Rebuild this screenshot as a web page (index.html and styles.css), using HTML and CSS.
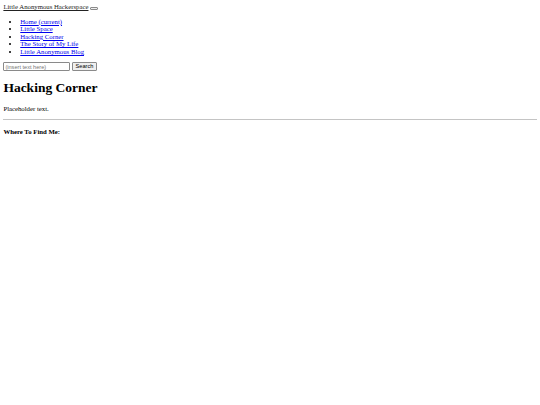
FILE: index.html
```html
<!DOCTYPE html>
<html lang="en">
<head>
<meta charset="utf-8">
<title>Hacking Corner</title>
<link rel="stylesheet" href="styles.css">
</head>
<body>
<nav class="navbar">
  <div class="brand-row">
    <a class="brand" href="#">Little Anonymous Hackerspace</a>
    <button class="toggler" type="button" aria-label="Toggle navigation"><span class="toggler-icon"></span></button>
  </div>
  <div class="collapse">
    <ul class="nav-list">
      <li><a href="#">Home <span>(current)</span></a></li>
      <li><a href="#">Little Space</a></li>
      <li><a href="#">Hacking Corner</a></li>
      <li><a href="#">The Story of My Life</a></li>
      <li><a href="#">Little Anonymous Blog</a></li>
    </ul>
    <form class="search">
      <input class="search-input" type="text" placeholder="(insert text here)">
      <button class="search-btn" type="button">Search</button>
    </form>
  </div>
</nav>
<main class="content">
  <h1 class="title">Hacking Corner</h1>
  <p class="text">Placeholder text.</p>
  <hr class="rule">
  <h4 class="footer-title">Where To Find Me:</h4>
</main>
</body>
</html>
```
FILE: styles.css
```css
body {
  margin: 3.375px;
  font-family: "Liberation Serif", "Times New Roman", serif;
  font-size: 6.75px;
  line-height: 7.6px;
  color: #000;
  background: #fff;
}

a {
  color: #0000ee;
}

.brand-row {
  display: flex;
  align-items: center;
  gap: 2px;
  height: 7.8px;
}

.brand {
  color: #222;
}

.toggler {
  width: 7.5px;
  height: 3px;
  padding: 0;
  margin-top: 2.5px;
  border: 0.6px solid #8a8a8a;
  border-radius: 1px;
  background: #efefef;
}

.nav-list {
  margin: 6.5px 0;
  padding-left: 16.875px;
}

.search {
  margin: 0;
  display: flex;
  align-items: center;
  gap: 1.7px;
}

.search-input {
  box-sizing: border-box;
  width: 67px;
  height: 9px;
  padding: 0 1px;
  font-family: "Liberation Sans", Arial, sans-serif;
  font-size: 5.625px;
  line-height: 7px;
  border: 0.6px solid #8a8a8a;
  border-radius: 1px;
  background: #fff;
}

.search-input::placeholder {
  color: #757575;
}

.search-btn {
  box-sizing: border-box;
  height: 9px;
  padding: 0 2.5px;
  font-family: "Liberation Sans", Arial, sans-serif;
  font-size: 5.625px;
  line-height: 7px;
  color: #000;
  border: 0.6px solid #8a8a8a;
  border-radius: 1px;
  background: #efefef;
}

.title {
  font-size: 13.5px;
  line-height: 15.5px;
  margin: 9.05px 0;
}

.text {
  margin: 6.75px 0;
}

.rule {
  margin: 3.375px 0;
  height: 0;
  border: 0;
  border-top: 1px solid #c4c4c4;
}

.footer-title {
  font-size: 6.75px;
  margin: 7.5px 0;
}
```
